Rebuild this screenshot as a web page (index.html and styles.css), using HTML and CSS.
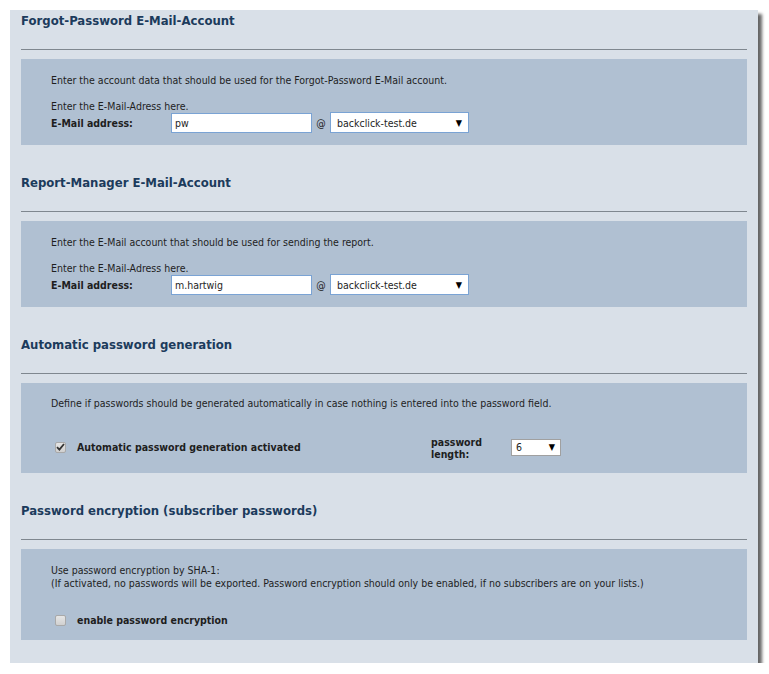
FILE: index.html
```html
<!DOCTYPE html>
<html>
<head>
<meta charset="utf-8">
<link rel="stylesheet" href="styles.css">
</head>
<body>
<div class="panel">
  <section class="sec">
    <h2 class="sec-title">Forgot-Password E-Mail-Account</h2>
    <div class="box box-mail">
      <p class="intro">Enter the account data that should be used for the Forgot-Password E-Mail account.</p>
      <p class="hint">Enter the E-Mail-Adress here.</p>
      <div class="field-row">
        <span class="lbl">E-Mail address:</span>
        <span class="input">pw</span>
        <span class="at">@</span>
        <span class="select select-domain"><span class="sel-text">backclick-test.de</span><span class="arrow">&#9660;</span></span>
      </div>
    </div>
  </section>
  <section class="sec">
    <h2 class="sec-title">Report-Manager E-Mail-Account</h2>
    <div class="box box-mail">
      <p class="intro">Enter the E-Mail account that should be used for sending the report.</p>
      <p class="hint">Enter the E-Mail-Adress here.</p>
      <div class="field-row">
        <span class="lbl">E-Mail address:</span>
        <span class="input">m.hartwig</span>
        <span class="at">@</span>
        <span class="select select-domain"><span class="sel-text">backclick-test.de</span><span class="arrow">&#9660;</span></span>
      </div>
    </div>
  </section>
  <section class="sec">
    <h2 class="sec-title">Automatic password generation</h2>
    <div class="box box-gen">
      <p class="intro">Define if passwords should be generated automatically in case nothing is entered into the password field.</p>
      <div class="check-row">
        <span class="cb cb-on"><svg width="9" height="8" viewBox="0 0 9 8"><path d="M1 4.2 L3.4 6.6 L8 1" fill="none" stroke="#333" stroke-width="1.8"/></svg></span>
        <span class="cb-label cb-label-gen">Automatic password generation activated</span>
        <span class="len-label">password<br>length:</span>
        <span class="select select-len"><span class="sel-text">6</span><span class="arrow">&#9660;</span></span>
      </div>
    </div>
  </section>
  <section class="sec">
    <h2 class="sec-title">Password encryption (subscriber passwords)</h2>
    <div class="box box-enc">
      <p class="intro">Use password encryption by SHA-1:<br>(If activated, no passwords will be exported. Password encryption should only be enabled, if no subscribers are on your lists.)</p>
      <div class="check-row">
        <span class="cb"></span>
        <span class="cb-label">enable password encryption</span>
      </div>
    </div>
  </section>
</div>
</body>
</html>
```
FILE: styles.css
```css
html, body {
  margin: 0;
  padding: 0;
  background: #ffffff;
}
body {
  font-family: "DejaVu Sans Condensed", "DejaVu Sans", sans-serif;
  font-size: 10.5px;
  color: #1e1e1e;
}
.panel {
  margin: 10px 0 0 10px;
  width: 726px;
  padding: 0 11px 23px 11px;
  background: #d9e0e8;
  box-shadow: 4px 4px 3px rgba(0, 0, 0, 0.6);
}
.sec + .sec {
  margin-top: 27px;
}
.sec-title {
  margin: 0 0 9px 0;
  height: 40px;
  box-sizing: border-box;
  padding-top: 3px;
  font-size: 13px;
  line-height: 16px;
  font-weight: bold;
  color: #1c3b5c;
  border-bottom: 1px solid #7f878f;
}
.box {
  background: #b0c0d2;
  padding: 0 0 0 30px;
  box-sizing: border-box;
}
.box-mail {
  height: 86px;
  padding-top: 15px;
}
.box-gen {
  height: 90px;
  padding-top: 14px;
}
.box-enc {
  height: 91px;
  padding-top: 15px;
}
p {
  margin: 0;
  line-height: 13px;
}
.hint {
  margin-top: 13px;
}
.field-row {
  display: flex;
  align-items: center;
  margin-top: -1px;
}
.lbl {
  width: 120px;
  font-weight: bold;
}
.input {
  width: 141px;
  height: 20px;
  box-sizing: border-box;
  border: 1px solid #7aa3d4;
  background: #fff;
  padding-left: 3px;
  line-height: 18px;
}
.at {
  width: 18px;
  text-align: center;
}
.select {
  display: flex;
  align-items: center;
  justify-content: space-between;
  box-sizing: border-box;
  background: #fff;
}
.select-domain {
  width: 139px;
  height: 21px;
  border: 1px solid #7aa3d4;
  padding: 0 6px 0 6px;
}
.arrow {
  font-size: 9px;
  color: #000;
}
.check-row {
  display: flex;
  align-items: center;
  margin-top: 24px;
}
.box-enc .check-row {
  margin-top: 24px;
}
.cb {
  width: 11px;
  height: 11px;
  box-sizing: border-box;
  border: 1px solid #a9a9a9;
  border-radius: 2px;
  background: linear-gradient(#e6e6e6, #d0d0d0);
  margin-left: 4px;
  display: flex;
  align-items: center;
  justify-content: center;
}
.cb-label {
  margin-left: 11px;
  font-weight: bold;
}
.cb-label-gen {
  width: 354px;
}
.len-label {
  width: 80px;
  font-weight: bold;
  line-height: 12px;
  padding-top: 2px;
}
.select-len {
  width: 50px;
  height: 17px;
  border: 1px solid #a0a0a0;
  padding: 0 5px 0 4px;
}
```
